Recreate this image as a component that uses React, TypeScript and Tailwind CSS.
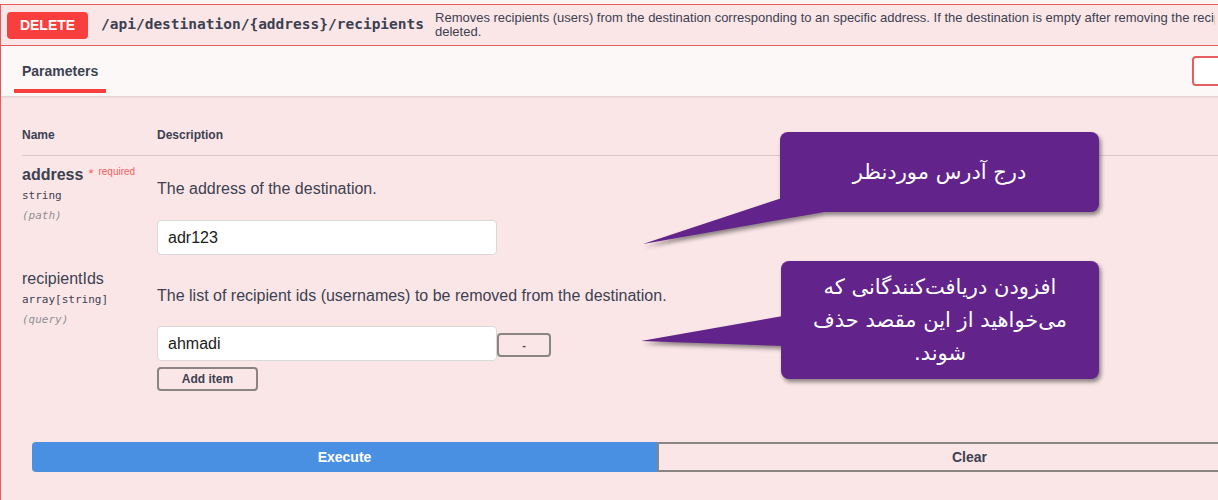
import React from "react";

const sans = "font-['Liberation_Sans',Arial,sans-serif]";
const mono = "font-['DejaVu_Sans_Mono','Liberation_Mono',monospace]";

function Callout({
  left,
  top,
  width,
  height,
  box,
  tail,
  children,
}: {
  left: number;
  top: number;
  width: number;
  height: number;
  box: { x: number; y: number; w: number; h: number };
  tail: string;
  children: React.ReactNode;
}) {
  return (
    <div className="absolute" style={{ left, top, width, height }}>
      <svg
        width={width}
        height={height}
        viewBox={`${left} ${top} ${width} ${height}`}
        className="absolute inset-0 drop-shadow-[2px_3px_2px_rgba(0,0,0,0.45)]"
      >
        <rect x={box.x} y={box.y} width={box.w} height={box.h} rx={8} fill="#62238a" />
        <polygon points={tail} fill="#62238a" />
      </svg>
      <div
        dir="rtl"
        className="absolute flex items-center justify-center text-center text-white text-[21px] leading-[33px] font-['DejaVu_Sans',sans-serif]"
        style={{ left: box.x - left, top: box.y - top, width: box.w, height: box.h }}
      >
        <div>{children}</div>
      </div>
    </div>
  );
}

export default function App() {
  return (
    <div className={`relative w-[1218px] h-[500px] overflow-hidden bg-[#fdf4f4] ${sans}`}>
      <div className="mt-1 w-[1300px] border border-[#e65c5f] bg-[#fbe6e7] text-[#3b4151]">
        {/* summary */}
        <div className="flex items-center h-[41px] pl-[6px] border-b border-[#e65c5f]">
          <span className="flex items-center justify-center w-[81px] h-[27px] rounded-[4px] bg-[#f93e3e] text-white text-[14px] font-bold">
            DELETE
          </span>
          <span className={`ml-[13px] text-[14.5px] font-bold ${mono}`}>
            /api/destination/{"{address}"}/recipients
          </span>
          <div className="ml-[11px] w-[780px] text-[13px] leading-[14px]">
            <div className="whitespace-nowrap overflow-hidden">
              Removes recipients (users) from the destination corresponding to an specific address. If the destination is empty after removing the recipients, it will be
            </div>
            <div>deleted.</div>
          </div>
        </div>

        {/* tab header */}
        <div className="flex items-stretch justify-between h-[50px] bg-[#fdf8f8] shadow-[0_1px_2px_rgba(0,0,0,0.12)]">
          <div className="ml-[13px] relative flex items-center px-2 text-[14px] font-bold">
            Parameters
            <span className="absolute left-0 right-0 bottom-[3px] h-1 bg-[#f93e3e]" />
          </div>
          <div className="mt-[10px] mr-[47px] w-[60px] h-[30px] rounded-[4px] border-2 border-[#e65c5f] bg-white" />
        </div>

        {/* parameters table */}
        <div className="pl-[21px] pt-[32px]">
          <div className="flex pb-[13px] border-b border-[#d9c6ca] text-[12px] leading-[14px] font-bold">
            <div className="w-[135px]">Name</div>
            <div>Description</div>
          </div>

          <div className="flex pt-[10px]">
            <div className="w-[135px]">
              <div className="flex items-start leading-[18px]">
                <span className="text-[16px] font-bold">address</span>
                <span className="ml-[5px] text-[#f25f5f] text-[13px] leading-[16px]">*</span>
                <span className="ml-[5px] text-[#f25f5f] text-[10px] leading-[12px]">required</span>
              </div>
              <div className={`text-[11px] leading-[20px] mt-[2px] ${mono}`}>string</div>
              <div className={`text-[11px] leading-[20px] italic text-[#8f8f93] ${mono}`}>(path)</div>
            </div>
            <div>
              <p className="mt-[14px] text-[16px] leading-[18px]">The address of the destination.</p>
              <div className="mt-[22px] w-[340px] h-[35px] flex items-center px-[10px] rounded-[4px] border border-[#d9d9d9] bg-white text-[16px] text-[#1b1b1b]">
                adr123
              </div>
            </div>
          </div>

          <div className="flex pt-[15px]">
            <div className="w-[135px]">
              <div className="text-[16px] leading-[18px]">recipientIds</div>
              <div className={`text-[11px] leading-[20px] mt-[2px] ${mono}`}>array[string]</div>
              <div className={`text-[11px] leading-[20px] italic text-[#8f8f93] ${mono}`}>(query)</div>
            </div>
            <div>
              <p className="mt-[17px] text-[16px] leading-[18px]">
                The list of recipient ids (usernames) to be removed from the destination.
              </p>
              <div className="mt-[21px] flex items-center">
                <div className="w-[340px] h-[35px] flex items-center px-[10px] rounded-[4px] border border-[#d9d9d9] bg-white text-[16px] text-[#1b1b1b]">
                  ahmadi
                </div>
                <button className="mt-[3px] w-[54px] h-[24px] rounded-[4px] border-2 border-[#888583] text-[11px] font-bold">
                  -
                </button>
              </div>
              <button className="mt-[6px] w-[101px] h-[24px] rounded-[4px] border-2 border-[#888583] text-[12px] font-bold">
                Add item
              </button>
            </div>
          </div>
        </div>

        {/* execute */}
        <div className="pl-[31px] pt-[51px] pb-[40px]">
          <div className="grid grid-cols-2 w-[1250px] h-[30px]">
            <button className="rounded-l-[4px] bg-[#4a90e2] text-white text-[14px] font-bold">Execute</button>
            <button className="rounded-r-[4px] border-2 border-[#888583] text-[14px] font-bold">Clear</button>
          </div>
        </div>
      </div>

      <Callout
        left={632}
        top={126}
        width={480}
        height={125}
        box={{ x: 780, y: 132, w: 319, h: 80 }}
        tail="782,198 643,244 830,211"
      >
        درج آدرس موردنظر
      </Callout>

      <Callout
        left={632}
        top={255}
        width={480}
        height={132}
        box={{ x: 781, y: 261, w: 318, h: 118 }}
        tail="783,316 641,341 783,346"
      >
        افزودن دریافت‌کنندگانی که
        <br />
        می‌خواهید از این مقصد حذف
        <br />
        شوند.
      </Callout>
    </div>
  );
}
